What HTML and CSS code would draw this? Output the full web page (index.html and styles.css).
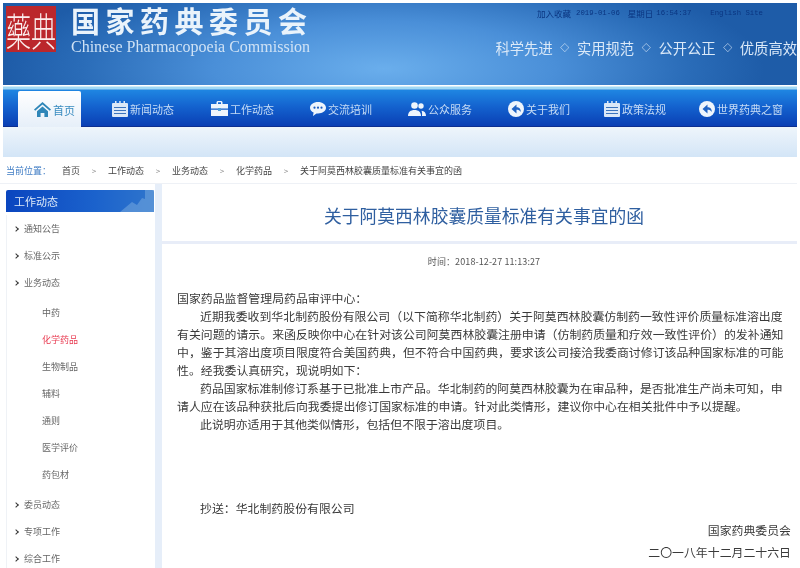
FILE: index.html
```html
<!DOCTYPE html>
<html lang="zh-CN">
<head>
    <meta charset="UTF-8">
    <meta name="viewport" content="width=device-width, initial-scale=1.0">
    <title>关于阿莫西林胶囊质量标准有关事宜的函</title>
    <link rel="stylesheet" href="styles.css">
</head>
<body>
<div class="page">
    <header class="header">
        <div class="seal"><span class="seal-char">藥</span><span class="seal-char">典</span></div>
        <div class="brand">
            <div class="brand-cn">国家药典委员会</div>
            <div class="brand-en">Chinese Pharmacopoeia Commission</div>
        </div>
        <div class="header-right">
            <div class="toolbar">
                <span>加入收藏</span>
                <span class="toolbar-num toolbar-date">2019-01-06</span>
                <span class="toolbar-week">星期日</span>
                <span class="toolbar-num toolbar-time">16:54:37</span>
                <span class="toolbar-num toolbar-en">English Site</span>
            </div>
            <div class="slogan"><span>科学先进</span><i>◇</i><span>实用规范</span><i>◇</i><span>公开公正</span><i>◇</i><span>优质高效</span></div>
        </div>
    </header>
    <div class="header-line"></div>

    <nav class="nav">
        <a class="nav-home">
            <svg width="17" height="15" viewBox="0 0 17 15"><path fill="#2f86b8" d="M8.500 0 0 7.500l1.200 1.300L8.500 2.400l7.300 6.400L17 7.500z"/><path fill="#2f86b8" d="M3 9.200 8.500 4.400 14 9.200V15h-3.600v-4H6.600v4H3z"/></svg>
            <span>首页</span>
        </a>
        <div class="nav-items">
            <a class="nav-item">
                <svg width="16" height="16" viewBox="0 0 16 16"><rect y="2" width="16" height="14" rx="1" fill="#dbe8f7"/><path fill="#dbe8f7" d="M3 0h1.500v3H3zM7.200 0h1.500v3H7.200zM11.500 0H13v3h-1.500z"/><path stroke="#3b74bd" d="M2 6.500h12M2 9.500h12M2 12.500h12"/></svg>
                <span>新闻动态</span>
            </a>
            <a class="nav-item">
                <svg width="17" height="15" viewBox="0 0 17 15"><path fill="#eef5fc" d="M5.500 3V1l1-1h4l1 1v2H17v4.500H0V3zM7 1.300V3h3V1.300zM0 8.700h17V15H0z"/><path fill="#4f9fd8" d="M7 7h3v3H7z"/></svg>
                <span>工作动态</span>
            </a>
            <a class="nav-item">
                <svg width="16" height="14" viewBox="0 0 16 14"><path fill="#eef5fc" d="M8 0c4.400 0 8 2.500 8 5.700s-3.600 5.700-8 5.700H6.500L3 14l.6-3.500C1.400 9.500 0 7.700 0 5.700 0 2.500 3.600 0 8 0z"/><circle cx="4.500" cy="5.700" r="1.100" fill="#1a5cc0"/><circle cx="8" cy="5.700" r="1.100" fill="#1a5cc0"/><circle cx="11.500" cy="5.700" r="1.100" fill="#1a5cc0"/></svg>
                <span>交流培训</span>
            </a>
            <a class="nav-item">
                <svg width="18" height="14" viewBox="0 0 18 14"><circle cx="6.500" cy="3.500" r="3.300" fill="#eef5fc"/><path fill="#eef5fc" d="M0 14c0-4 2.500-6 6.500-6s6.500 2 6.500 6z"/><circle cx="13" cy="4" r="2.700" fill="#eef5fc"/><path fill="#eef5fc" d="M14 14h4c0-3-1.500-5.200-4.500-5.300 0 0 1 2.300.5 5.300z"/></svg>
                <span>公众服务</span>
            </a>
            <a class="nav-item">
                <svg width="16" height="16" viewBox="0 0 16 16"><circle cx="8" cy="8" r="8" fill="#eef5fc"/><path fill="#1f63c4" d="M3.500 8 8.500 3.500V6.200c2.500 0 4.300 1.300 4.300 4.800-1-1.700-2.300-2.200-4.300-2.200v3.700z"/></svg>
                <span>关于我们</span>
            </a>
            <a class="nav-item">
                <svg width="16" height="16" viewBox="0 0 16 16"><rect y="2" width="16" height="14" rx="1" fill="#dbe8f7"/><path fill="#dbe8f7" d="M3 0h1.500v3H3zM7.200 0h1.500v3H7.200zM11.500 0H13v3h-1.500z"/><path stroke="#3b74bd" d="M2 6.500h12M2 9.500h12M2 12.500h12"/></svg>
                <span>政策法规</span>
            </a>
            <a class="nav-item">
                <svg width="16" height="16" viewBox="0 0 16 16"><circle cx="8" cy="8" r="8" fill="#eef5fc"/><path fill="#1f63c4" d="M3.500 8 8.500 3.500V6.200c2.500 0 4.300 1.300 4.300 4.800-1-1.700-2.300-2.200-4.300-2.200v3.700z"/></svg>
                <span>世界药典之窗</span>
            </a>
        </div>
    </nav>
    <div class="band"></div>

    <div class="crumbs">
        <span class="crumbs-label">当前位置：</span>
        <span class="crumb crumb-first">首页</span>
        <span class="crumb-sep">&gt;</span>
        <span class="crumb">工作动态</span>
        <span class="crumb-sep">&gt;</span>
        <span class="crumb">业务动态</span>
        <span class="crumb-sep">&gt;</span>
        <span class="crumb">化学药品</span>
        <span class="crumb-sep">&gt;</span>
        <span class="crumb">关于阿莫西林胶囊质量标准有关事宜的函</span>
    </div>

    <div class="main">
        <aside class="side">
            <div class="side-head">
                <span>工作动态</span>
                <svg class="side-deco" width="34" height="22" viewBox="0 0 34 22"><path fill="#6a9fdc" fill-opacity=".65" d="M0 22 12 12l5 3 5-7 3 1V0h9v22z"/></svg>
            </div>
            <ul class="side-menu">
                <li class="side-row">通知公告</li>
                <li class="side-row">标准公示</li>
                <li class="side-row">业务动态
                    <ul class="side-sub">
                        <li>中药</li>
                        <li class="current">化学药品</li>
                        <li>生物制品</li>
                        <li>辅料</li>
                        <li>通则</li>
                        <li>医学评价</li>
                        <li>药包材</li>
                    </ul>
                </li>
                <li class="side-row">委员动态</li>
                <li class="side-row">专项工作</li>
                <li class="side-row">综合工作</li>
            </ul>
        </aside>

        <main class="article">
            <h1 class="article-title">关于阿莫西林胶囊质量标准有关事宜的函</h1>
            <div class="article-time">时间：2018-12-27 11:13:27</div>
            <div class="article-body">
                <p class="to">国家药品监督管理局药品审评中心：</p>
                <p>近期我委收到华北制药股份有限公司（以下简称华北制药）关于阿莫西林胶囊仿制药一致性评价质量标准溶出度有关问题的请示。来函反映你中心在针对该公司阿莫西林胶囊注册申请（仿制药质量和疗效一致性评价）的发补通知中，鉴于其溶出度项目限度符合美国药典，但不符合中国药典，要求该公司接洽我委商讨修订该品种国家标准的可能性。经我委认真研究，现说明如下：</p>
                <p>药品国家标准制修订系基于已批准上市产品。华北制药的阿莫西林胶囊为在审品种，是否批准生产尚未可知，申请人应在该品种获批后向我委提出修订国家标准的申请。针对此类情形，建议你中心在相关批件中予以提醒。</p>
                <p>此说明亦适用于其他类似情形，包括但不限于溶出度项目。</p>
                <p class="cc">抄送：华北制药股份有限公司</p>
                <p class="sign">国家药典委员会</p>
                <p class="sign">二〇一八年十二月二十六日</p>
            </div>
        </main>
    </div>
</div>
</body>
</html>
```

FILE: styles.css
```css
* {
  box-sizing: border-box;
}

body {
  margin: 0;
  background-color: white;
  font-family: "Noto Sans CJK SC", "Liberation Sans", sans-serif;
}

ul {
  list-style: none;
  margin: 0;
  padding: 0;
}

.page {
  width: 800px;
  height: 568px;
  overflow: hidden;
  filter: blur(0.45px);
}

/* header */
.header {
  display: flex;
  height: 82px;
  margin: 3px 3px 0;
  background: radial-gradient(ellipse 380px 105px at 48% 80%, #6aaeec 0%, #4a8fd8 45%, #2a6cb8 80%, #1e5ca8 100%);
}

.seal {
  display: flex;
  width: 50px;
  height: 46px;
  margin: 3px 0 0 3px;
  background-color: #bb272c;
}

.seal-char {
  width: 25px;
  height: 25px;
  margin-top: 4px;
  color: #fbeeee;
  font-size: 25px;
  font-weight: 300;
  line-height: 25px;
  text-align: center;
  transform: scaleY(1.55);
  transform-origin: top;
}

.brand {
  width: 240px;
  margin-left: 15px;
}

.brand-cn {
  color: #eaf3fb;
  font-size: 29px;
  font-weight: 700;
  line-height: 35px;
  letter-spacing: 5.500px;
  white-space: nowrap;
}

.brand-en {
  color: #cfe2f5;
  font-family: "Liberation Serif", serif;
  font-size: 16px;
  line-height: 18px;
  white-space: nowrap;
}

.header-right {
  flex: 1;
  min-width: 0;
}

.toolbar {
  display: flex;
  margin: 4px 0 0 226px;
  color: #0a3580;
  font-size: 8.500px;
  line-height: 12px;
  white-space: nowrap;
}

.toolbar-num {
  font-family: "Liberation Mono", monospace;
  font-size: 7.300px;
}

.toolbar-date {
  margin-left: 5px;
}

.toolbar-week {
  margin-left: 8px;
}

.toolbar-time {
  margin-left: 3px;
}

.toolbar-en {
  margin-left: 19px;
}

.slogan {
  display: flex;
  margin: 18px 0 0 184.500px;
  color: #dbe9f8;
  font-size: 14.300px;
  line-height: 22px;
  white-space: nowrap;
}

.slogan i {
  width: 25px;
  font-size: 9px;
  font-style: normal;
  text-align: center;
}

.header-line {
  height: 5px;
  margin: 0 3px;
  background: linear-gradient(#ffffff 0, #ffffff 20%, #9fd8f5 40%, #9fd8f5 80%, #2a84dc 100%);
}

/* nav */
.nav {
  display: flex;
  align-items: flex-end;
  height: 37px;
  margin: 0 3px;
  padding-left: 15px;
  background: linear-gradient(#1f86e2 0%, #1463cf 45%, #0a3fb4 100%);
  border-bottom: 1px solid #0c2f90;
}

.nav-home {
  display: flex;
  align-items: center;
  gap: 2px;
  width: 63px;
  height: 36px;
  margin-bottom: -1px;
  padding: 1px 0 0 16px;
  background: linear-gradient(#ffffff, #e6eff9);
  border-radius: 2px 2px 0 0;
  color: #3a8cc0;
  font-size: 11px;
}

.nav-items {
  display: grid;
  grid-template-columns: 99px 99px 98px 100px 96px 95px auto;
  height: 36px;
  margin-left: 31px;
}

.nav-item {
  display: flex;
  align-items: center;
  gap: 2px;
  padding-top: 1px;
  color: #c6dcf5;
  font-size: 11px;
  white-space: nowrap;
}

.band {
  height: 30px;
  margin: 0 3px;
  background: linear-gradient(#eef5fb, #d3e5f7);
}

/* breadcrumb */
.crumbs {
  display: flex;
  align-items: center;
  height: 27px;
  margin-right: 3px;
  padding-left: 6px;
  border-bottom: 1px solid #eef1f6;
  color: #444;
  font-size: 9px;
  white-space: nowrap;
}

.crumbs-label {
  width: 56px;
  color: #3f7cc4;
}

.crumb-sep {
  width: 28px;
  color: #888;
  font-size: 8px;
  text-align: center;
}

/* sidebar */
.main {
  display: flex;
  align-items: stretch;
  margin-right: 3px;
}

.side {
  width: 162px;
  height: 400px;
  padding: 6px 0 0 6px;
  border-right: 7px solid #e6eef9;
}

.side-head {
  display: flex;
  justify-content: space-between;
  height: 22px;
  width: 148px;
  padding-left: 8px;
  background: linear-gradient(90deg, #0a45bf, #1b62cc 60%, #2f75cc);
  border-radius: 2px 2px 0 0;
  color: #dce9f8;
  font-size: 11px;
  line-height: 22px;
}

.side-deco {
  flex-shrink: 0;
}

.side-menu {
  width: 148px;
  margin-top: 3px;
  border-left: 1px solid #eff2f6;
  color: #666;
  font-size: 9px;
}

.side-row {
  position: relative;
  padding-left: 17px;
  line-height: 27px;
}

.side-row::before {
  content: "";
  position: absolute;
  left: 7px;
  top: 12px;
  width: 3px;
  height: 3px;
  border-top: 1.500px solid #333;
  border-right: 1.500px solid #333;
  transform: rotate(45deg);
}

.side-sub {
  padding: 3px 0 3px 18px;
}

.side-sub .current {
  color: #e8384f;
}

/* article */
.article {
  flex: 1;
  min-width: 0;
}

.article-title {
  height: 60px;
  margin: 0;
  padding-left: 9px;
  border-bottom: 3px solid #e8edf8;
  color: #2f5fa0;
  font-size: 17.800px;
  font-weight: 400;
  line-height: 63px;
  text-align: center;
  white-space: nowrap;
}

.article-time {
  margin-top: 10px;
  padding-left: 9px;
  color: #555;
  font-size: 9px;
  letter-spacing: 0.100px;
  line-height: 16px;
  text-align: center;
}

.article-body {
  margin-top: 19px;
  padding: 0 12px 0 15px;
  color: #3a3a3a;
  font-size: 11.900px;
  line-height: 18px;
}

.article-body p {
  margin: 0;
  text-indent: 23px;
}

.article-body .to {
  text-indent: 0;
}

.article-body .cc {
  margin-top: 66px;
}

.article-body .sign {
  margin: 4px -6px 0 0;
  text-align: right;
  text-indent: 0;
}
```
